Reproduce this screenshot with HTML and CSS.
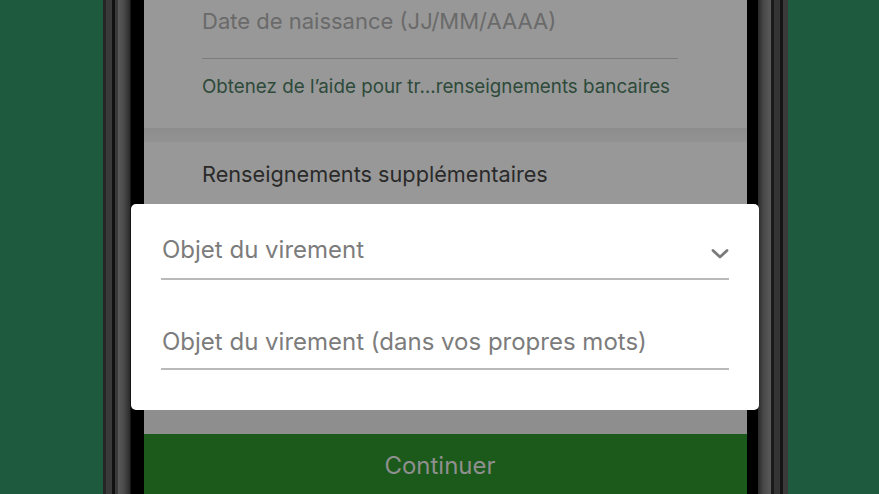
FILE: index.html
```html
<!DOCTYPE html>
<html lang="fr">
<head>
<meta charset="utf-8">
<link rel="stylesheet" href="styles.css">
</head>
<body>
<div class="stage">
  <div class="phone">
    <div class="bezel bezel-left"></div>
    <div class="screen">
      <section class="card card-top">
        <div class="field-dim">Date de naissance (JJ/MM/AAAA)</div>
        <div class="help">Obtenez de l’aide pour tr…renseignements bancaires</div>
      </section>
      <div class="gap"></div>
      <section class="card card-extra">
        <div class="extra-title">Renseignements supplémentaires</div>
      </section>
      <div class="spacer"></div>
      <div class="continue">Continuer</div>
    </div>
    <div class="bezel bezel-right"></div>
  </div>
  <div class="dialog">
    <div class="dfield">
      <span class="dlabel">Objet du virement</span>
      <svg class="chev" width="18" height="12" viewBox="0 0 18 12"><path d="M2 2.5 L9 9 L16 2.5" fill="none" stroke="#7a7a7a" stroke-width="2.8" stroke-linecap="round" stroke-linejoin="round"/></svg>
    </div>
    <div class="dfield">
      <span class="dlabel">Objet du virement (dans vos propres mots)</span>
    </div>
  </div>
</div>
</body>
</html>
```
FILE: styles.css
```css
* { box-sizing: border-box; }
html, body { margin: 0; padding: 0; }
body {
  width: 879px;
  height: 494px;
  overflow: hidden;
  background: #1e5a3d;
  font-family: Inter, "Noto Sans", sans-serif;
}
.stage {
  position: relative;
  width: 879px;
  height: 494px;
  padding-left: 103px;
}
.phone {
  display: flex;
  width: 685px;
  height: 494px;
}
.bezel { width: 41px; height: 100%; flex: none; }
.bezel-left {
  background: linear-gradient(90deg,
    #262626 0px, #262626 3px,
    #3a3a3a 3px, #3a3a3a 9px,
    #111 9px, #111 12px,
    #3a3a3a 12px, #3a3a3a 15px,
    #5a5a5a 15px, #4a4a4a 21px, #2a2a2a 27px,
    #000 28px, #000 41px);
}
.bezel-right {
  background: linear-gradient(90deg,
    #000 0px, #000 11px,
    #2a2a2a 11px, #4a4a4a 17px, #5a5a5a 24px,
    #1a1a1a 24px, #1a1a1a 27px,
    #343434 27px, #343434 33px,
    #151515 33px, #151515 36px,
    #3a3a3a 36px, #3a3a3a 41px);
}
.screen {
  width: 603px;
  flex: none;
  display: flex;
  flex-direction: column;
  background: #989898;
}
.card { background: #989898; padding-left: 58px; padding-right: 69px; }
.card-top { height: 128px; }
.field-dim {
  height: 59px;
  padding-top: 8px;
  font-size: 22px;
  color: #6a6a6a;
  border-bottom: 1px solid #7c7c7c;
}
.help {
  margin-top: 16px;
  font-size: 18.8px;
  color: #2d4a3a;
}
.gap {
  height: 14px;
  background: linear-gradient(180deg, #8d8d8d, #929292);
}
.card-extra { height: 62px; }
.extra-title {
  padding-top: 19px;
  font-size: 21.7px;
  color: #2a2a2a;
}
.spacer { flex: 1; background: #8e8e8e; }
.continue {
  height: 60px;
  background: #1b5a1b;
  color: #8f8f8f;
  font-size: 24px;
  text-align: center;
  line-height: 64px;
  padding-right: 11px;
}
.dialog {
  position: absolute;
  left: 131px;
  top: 204px;
  width: 628px;
  height: 206px;
  background: #fff;
  border-radius: 5px;
  padding: 25px 30px 0 30px;
  display: flex;
  flex-direction: column;
  gap: 39px;
}
.dfield {
  height: 51px;
  border-bottom: 2px solid #b9b9b9;
  display: flex;
  align-items: flex-start;
  justify-content: space-between;
  padding-left: 1px;
  padding-right: 0;
}
.dlabel {
  font-size: 24px;
  color: #7c7c7c;
  line-height: 42px;
}
.dfield + .dfield .dlabel { line-height: 46px; }
.chev { margin-top: 19px; margin-right: 0; }
```
